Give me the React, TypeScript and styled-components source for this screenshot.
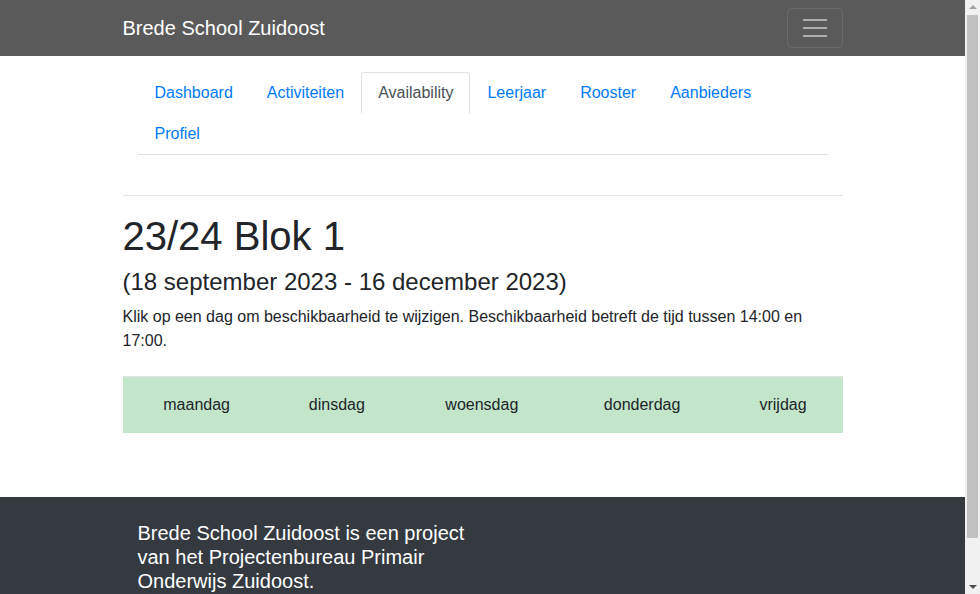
import React from "react";
import styled, { createGlobalStyle } from "styled-components";

const Global = createGlobalStyle`
  html, body { margin: 0; padding: 0; }
  body {
    font-family: "Liberation Sans", Arial, sans-serif;
    font-size: 16px;
    line-height: 1.5;
    color: #212529;
    background: #fff;
    padding-right: 15px;
  }
  * { box-sizing: border-box; }
`;

const Navbar = styled.nav`
  background: #5a5a5a;
  padding: 8px 0;
`;

const Container = styled.div`
  width: 720px;
  margin: 0 auto;
`;

const NavInner = styled(Container)`
  display: flex;
  align-items: center;
  justify-content: space-between;
`;

const Brand = styled.a`
  color: #fff;
  font-size: 20px;
  line-height: 30px;
  text-decoration: none;
  padding: 5px 0;
`;

const Toggler = styled.button`
  width: 56px;
  height: 40px;
  background: transparent;
  border: 1px solid rgba(255, 255, 255, 0.1);
  border-radius: 4px;
  display: flex;
  flex-direction: column;
  align-items: center;
  justify-content: center;
  gap: 6px;
  padding: 0;
`;

const Bar = styled.span`
  display: block;
  width: 24px;
  height: 2px;
  background: rgba(255, 255, 255, 0.5);
`;

const Tabs = styled.ul`
  list-style: none;
  margin: 16px 15px 40px;
  padding: 0;
  display: flex;
  flex-wrap: wrap;
  border-bottom: 1px solid #dee2e6;
`;

const TabItem = styled.li`
  margin-bottom: -1px;
`;

const TabLink = styled.a<{ $active?: boolean }>`
  display: block;
  padding: 8px 16px;
  font-size: 16px;
  line-height: 24px;
  text-decoration: none;
  border: 1px solid transparent;
  border-color: ${(p) => (p.$active ? "#dee2e6 #dee2e6 #fff" : "transparent")};
  border-top-left-radius: 4px;
  border-top-right-radius: 4px;
  color: ${(p) => (p.$active ? "#495057" : "#007bff")};
  background: ${(p) => (p.$active ? "#fff" : "transparent")};
`;

const Rule = styled.hr`
  margin: 0 0 16px;
  border: 0;
  border-top: 1px solid rgba(0, 0, 0, 0.1);
`;

const Title = styled.h1`
  font-size: 40px;
  font-weight: 500;
  line-height: 1.2;
  margin: 0 0 8px;
`;

const Sub = styled.h4`
  font-size: 24px;
  font-weight: 500;
  line-height: 1.2;
  margin: 0 0 8px;
`;

const Text = styled.p`
  margin: 0 0 23px;
`;

const DayTable = styled.table`
  width: 100%;
  border-collapse: collapse;
  margin-bottom: 64px;
`;

const DayCell = styled.td`
  background: #c3e6cb;
  border-top: 1px solid #dee2e6;
  padding: 16px;
  text-align: center;
  line-height: 24px;
`;

const Footer = styled.footer`
  background: #343a40;
  color: #fff;
  padding: 24px 0 0;
  min-height: 146px;
`;

const FooterRow = styled(Container)`
  display: flex;
`;

const FooterCol = styled.div`
  width: 360px;
  padding: 0 15px;
  font-size: 20px;
  line-height: 24px;
`;

const ScrollTrack = styled.div`
  position: fixed;
  top: 0;
  right: 0;
  width: 15px;
  height: 100vh;
  background: #f1f1f1;
  display: flex;
  flex-direction: column;
  align-items: center;
`;

const Arrow = styled.div<{ $down?: boolean; $color: string }>`
  width: 0;
  height: 0;
  margin: 5px 0;
  border-left: 4px solid transparent;
  border-right: 4px solid transparent;
  ${(p) =>
    p.$down
      ? `border-top: 4px solid ${p.$color};`
      : `border-bottom: 4px solid ${p.$color};`}
`;

const Thumb = styled.div`
  width: 11px;
  margin-top: 1px;
  height: 523px;
  background: #c1c1c1;
  flex: none;
`;

const Spacer = styled.div`
  flex: 1;
`;

const tabs = ["Dashboard", "Activiteiten", "Availability", "Leerjaar", "Rooster", "Aanbieders", "Profiel"];
const days = ["maandag", "dinsdag", "woensdag", "donderdag", "vrijdag"];

export default function App() {
  return (
    <>
      <Global />
      <Navbar>
        <NavInner>
          <Brand href="#">Brede School Zuidoost</Brand>
          <Toggler aria-label="menu">
            <Bar />
            <Bar />
            <Bar />
          </Toggler>
        </NavInner>
      </Navbar>
      <Container>
        <Tabs>
          {tabs.map((t) => (
            <TabItem key={t}>
              <TabLink href="#" $active={t === "Availability"}>
                {t}
              </TabLink>
            </TabItem>
          ))}
        </Tabs>
        <Rule />
        <Title>23/24 Blok 1</Title>
        <Sub>(18 september 2023 - 16 december 2023)</Sub>
        <Text>
          Klik op een dag om beschikbaarheid te wijzigen. Beschikbaarheid betreft de tijd tussen 14:00 en 17:00.
        </Text>
        <DayTable>
          <tbody>
            <tr>
              {days.map((d) => (
                <DayCell key={d}>{d}</DayCell>
              ))}
            </tr>
          </tbody>
        </DayTable>
      </Container>
      <Footer>
        <FooterRow>
          <FooterCol>Brede School Zuidoost is een project van het Projectenbureau Primair Onderwijs Zuidoost.</FooterCol>
        </FooterRow>
      </Footer>
      <ScrollTrack aria-hidden>
        <Arrow $color="#a3a3a3" />
        <Thumb />
        <Spacer />
        <Arrow $down $color="#505050" />
      </ScrollTrack>
    </>
  );
}
